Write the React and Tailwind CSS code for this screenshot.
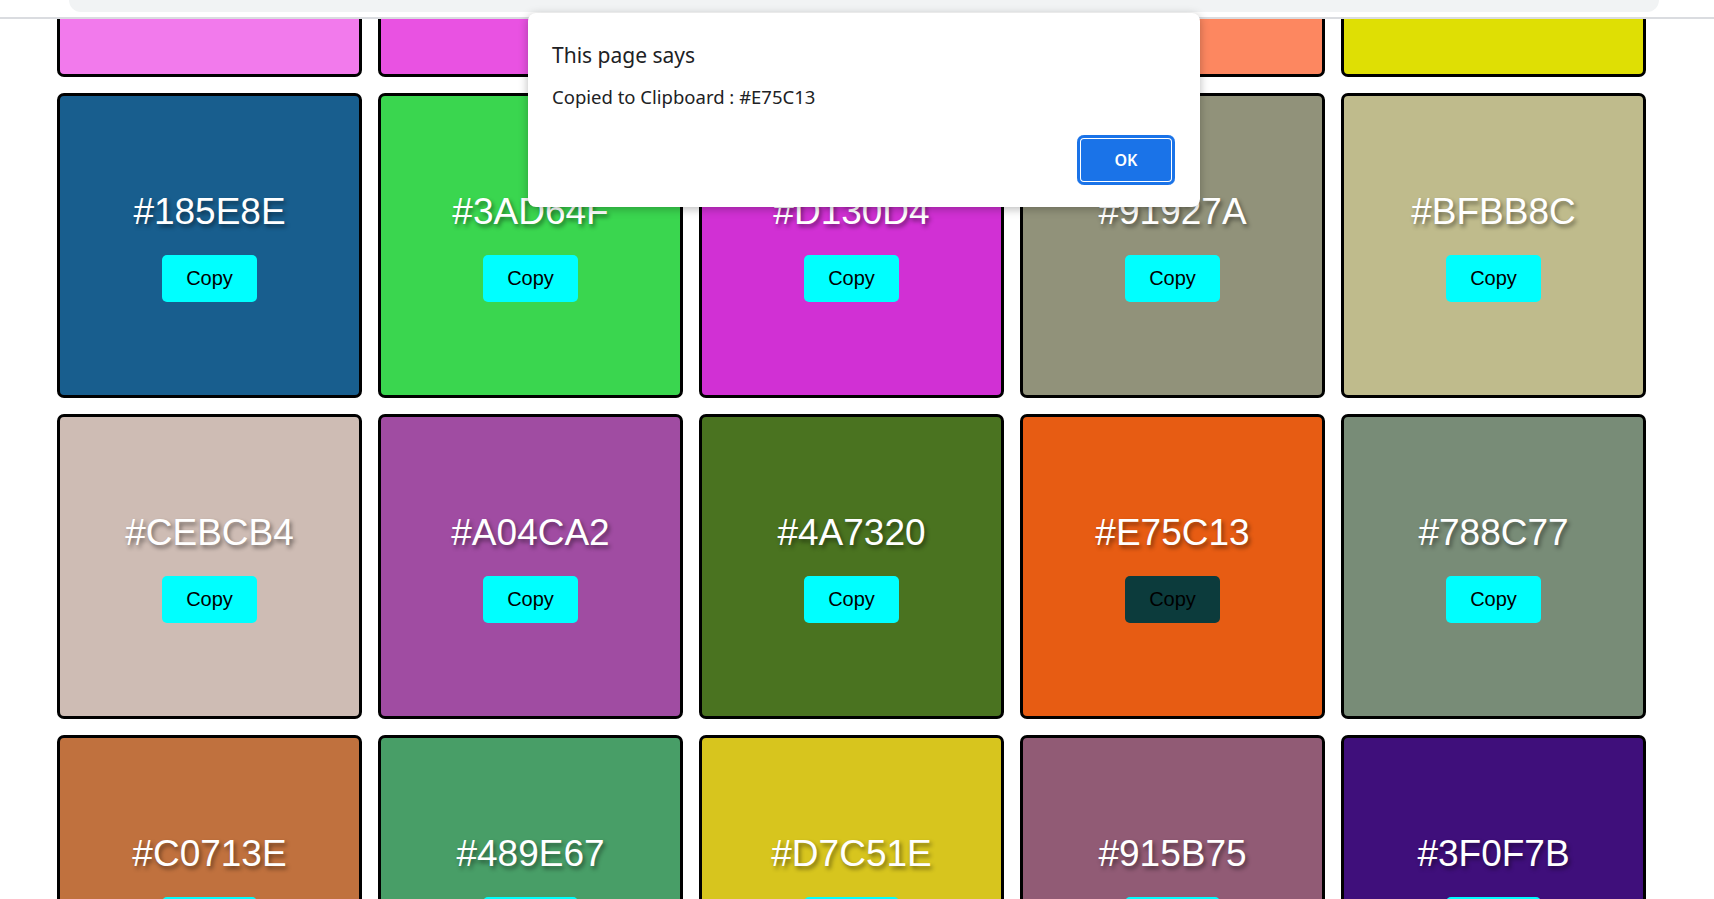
const rows = [
    ['#F27AEC', '#E952E2', '#5C8DD6', '#FD8760', '#DFDF04'],
    ['#185E8E', '#3AD64F', '#D130D4', '#91927A', '#BFBB8C'],
    ['#CEBCB4', '#A04CA2', '#4A7320', '#E75C13', '#788C77'],
    ['#C0713E', '#489E67', '#D7C51E', '#915B75', '#3F0F7B'],
];

const copied = '#E75C13';

export default function App() {
    return (
        <div className="relative h-[899px] w-full overflow-hidden bg-white">
            {/* browser toolbar edge */}
            <div className="h-[19px] border-b-2 border-[#dadce0] bg-white">
                <div className="ml-[69px] h-[12px] w-[1590px] rounded-b-[12px] bg-[#f1f3f4]" />
            </div>

            <div className="h-[880px] overflow-hidden">
                <div className="-mt-[247px] grid grid-cols-[repeat(5,305px)] gap-4 pl-[57px]">
                    {rows.flat().map((hex, i) => (
                        <ColorCard key={i} hex={hex} active={hex === copied} />
                    ))}
                </div>
            </div>

            <AlertDialog message={`Copied to Clipboard : ${copied}`} />
        </div>
    );
}

function ColorCard({ hex, active }) {
    return (
        <div
            className="flex h-[305px] w-[305px] flex-col items-center justify-center gap-[22px] rounded-[7px] border-[3px] border-black"
            style={{ backgroundColor: hex }}
        >
            <h2 className="pt-[2px] font-['Liberation_Sans',Arial,sans-serif] text-[37px] leading-[42px] text-white [text-shadow:2px_3px_4px_rgba(0,0,0,0.45)]">
                {hex}
            </h2>
            <button
                className={
                    'rounded-[5px] px-6 py-3 font-[\'Liberation_Sans\',Arial,sans-serif] text-[20px] leading-[23px] text-black ' +
                    (active ? 'bg-[#0c3b3c]' : 'bg-[#00ffff]')
                }
            >
                Copy
            </button>
        </div>
    );
}

function AlertDialog({ message }) {
    return (
        <div className="absolute left-[528px] top-[13px] flex h-[194px] w-[672px] flex-col rounded-[8px] bg-white px-6 pb-[22px] pt-[28px] font-['Noto_Sans','Open_Sans',sans-serif] text-[#202124] shadow-[0_2px_10px_rgba(0,0,0,0.28)]">
            <p className="text-[21px] leading-[29px]">This page says</p>
            <p className="mt-[14px] text-[18.5px] leading-[25px]">{message}</p>
            <div className="mt-auto flex justify-end pr-px">
                <button className="h-[50px] w-[98px] rounded-[7px] bg-[#1a73e8] text-[16px] font-semibold text-white shadow-[inset_0_0_0_3px_#1a73e8,inset_0_0_0_4px_#ffffff]">
                    OK
                </button>
            </div>
        </div>
    );
}
